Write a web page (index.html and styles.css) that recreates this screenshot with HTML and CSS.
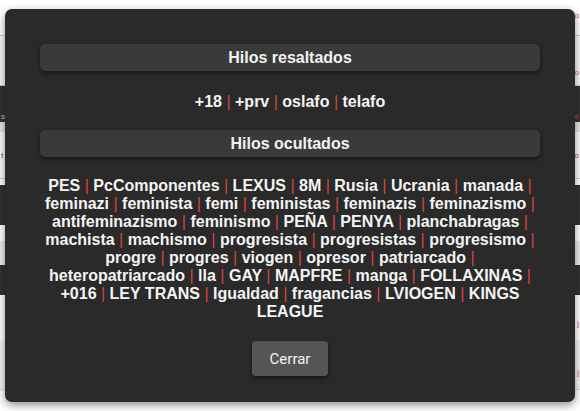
FILE: index.html
```html
<!DOCTYPE html>
<html lang="es">
<head>
<meta charset="utf-8">
<title>Hilos</title>
<link rel="stylesheet" href="styles.css">
</head>
<body>
<div class="page">
  <div class="row r1"><span></span><span class="red">o</span></div>
  <div class="row r2"><span></span><span class="red">o</span></div>
  <div class="row bar b1"><span class="lt">s</span><span class="red">e</span></div>
  <div class="row r3"></div>
  <div class="row r4"><span class="blue">t</span><span class="red">o</span></div>
  <div class="row bar b2"></div>
  <div class="row r5"></div>
  <div class="row r6"></div>
  <div class="row bar b3"></div>
  <div class="row r7"><span></span><span class="red">j</span></div>
  <div class="row r8"><span></span><span class="red">j</span></div>
  <div class="row r9"></div>
</div>

<div class="modal">
  <h2 class="head">Hilos resaltados</h2>
  <p class="tags tags-top">+18 <span class="sep">|</span> +prv <span class="sep">|</span> oslafo <span class="sep">|</span> telafo</p>
  <h2 class="head">Hilos ocultados</h2>
  <p class="tags">PES <span class="sep">|</span> PcComponentes <span class="sep">|</span> LEXUS <span class="sep">|</span> 8M <span class="sep">|</span> Rusia <span class="sep">|</span> Ucrania <span class="sep">|</span> manada <span class="sep">|</span> feminazi <span class="sep">|</span> feminista <span class="sep">|</span> femi <span class="sep">|</span> feministas <span class="sep">|</span> feminazis <span class="sep">|</span> feminazismo <span class="sep">|</span> antifeminazismo <span class="sep">|</span> feminismo <span class="sep">|</span> PEÑA <span class="sep">|</span> PENYA <span class="sep">|</span> planchabragas <span class="sep">|</span> machista <span class="sep">|</span> machismo <span class="sep">|</span> progresista <span class="sep">|</span> progresistas <span class="sep">|</span> progresismo <span class="sep">|</span> progre <span class="sep">|</span> progres <span class="sep">|</span> viogen <span class="sep">|</span> opresor <span class="sep">|</span> patriarcado <span class="sep">|</span> heteropatriarcado <span class="sep">|</span> lla <span class="sep">|</span> GAY <span class="sep">|</span> MAPFRE <span class="sep">|</span> manga <span class="sep">|</span> FOLLAXINAS <span class="sep">|</span> +016 <span class="sep">|</span> LEY TRANS <span class="sep">|</span> Igualdad <span class="sep">|</span> fragancias <span class="sep">|</span> LVIOGEN <span class="sep">|</span> KINGS LEAGUE</p>
  <div class="actions"><button class="btn" type="button">Cerrar</button></div>
</div>
</body>
</html>
```
FILE: styles.css
```css
html, body {
  margin: 0;
  padding: 0;
  background: #ffffff;
  font-family: "Liberation Sans", Arial, sans-serif;
  overflow: hidden;
}

.page {
  display: flex;
  flex-direction: column;
  width: 580px;
}

.row {
  display: flex;
  justify-content: space-between;
  align-items: center;
  font-size: 8px;
  line-height: 9px;
  box-sizing: border-box;
  padding: 0 1px;
}

.red { color: #d9443a; }
.blue { color: #1a5dab; }
.lt { color: #cccccc; }

.r1 { height: 36px; background: #ffffff; border-bottom: 1px solid #c8c8c8; padding-bottom: 4px; }
.r2 { height: 50px; background: #f7f7f7; border-bottom: 1px solid #cfcfcf; align-items: flex-end; padding-bottom: 8px; }
.bar { background: #333333; }
.b1 { height: 36px; align-items: flex-end; padding-bottom: 1px; }
.r3 { height: 10px; background: #e4e4e4; }
.r4 { height: 47px; background: #fafafa; border-bottom: 1px solid #cfcfcf; }
.b2 { height: 40px; margin-top: 6px; }
.r5 { height: 16px; background: #ffffff; }
.r6 { height: 24px; background: #ececec; }
.b3 { height: 30px; }
.r7 { height: 45px; background: #ffffff; align-items: flex-end; padding-bottom: 12px; }
.r8 { height: 50px; background: #f4f4f4; align-items: flex-end; padding-bottom: 12px; border-bottom: 1px solid #dddddd; }
.r9 { height: 30px; background: #ffffff; }

.modal {
  position: absolute;
  left: 5px;
  top: 9px;
  width: 570px;
  box-sizing: border-box;
  padding: 35px 35px 26px;
  background: #2a2a2a;
  border-radius: 7px;
  box-shadow: 0 3px 8px rgba(0, 0, 0, 0.45);
  color: #ffffff;
  text-align: center;
}

.head {
  margin: 0;
  height: 27px;
  line-height: 28px;
  background: #3a3a3a;
  border-radius: 5px;
  box-shadow: 0 2px 5px rgba(0, 0, 0, 0.5);
  font-size: 16px;
  font-weight: bold;
  color: #f2f2f2;
}

.tags {
  margin: 20px 0;
  font-size: 16px;
  line-height: 18px;
  font-weight: bold;
  color: #f4f4f4;
}

.tags-top {
  margin: 22px 0 19px;
}

.sep {
  color: #d9443a;
  font-weight: normal;
}

.actions {
  display: flex;
  justify-content: center;
}

.btn {
  height: 35px;
  padding: 0 18px;
  border: none;
  border-radius: 4px;
  background: #555555;
  color: #f2f2f2;
  font-family: Roboto, "Liberation Sans", sans-serif;
  font-size: 15px;
  box-shadow: 0 2px 5px rgba(0, 0, 0, 0.5);
}
```
